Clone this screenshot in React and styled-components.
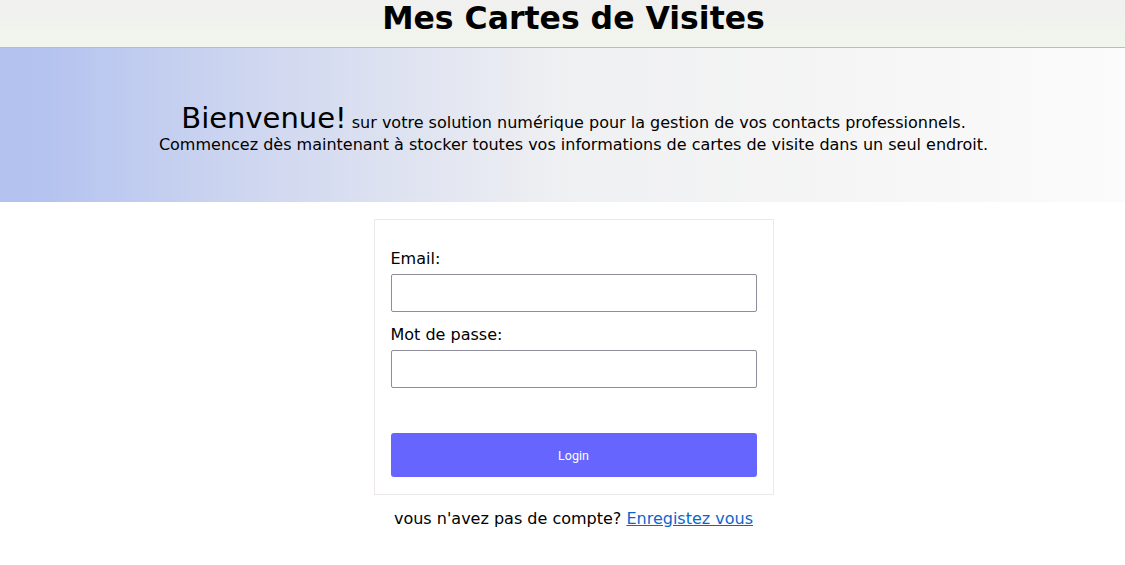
import React from "react";
import styled, { createGlobalStyle } from "styled-components";

const GlobalStyle = createGlobalStyle`
  html, body {
    margin: 0;
    padding: 0;
    background: #ffffff;
    font-family: "DejaVu Sans", Verdana, sans-serif;
    color: #000;
  }
  * { box-sizing: border-box; }
`;

const Header = styled.header`
  height: 48px;
  padding-left: 22px;
  background: linear-gradient(to bottom, #f0f0f0 0%, #f2f5ec 100%);
  border-bottom: 1px solid #bcbcbc;
  text-align: center;
`;

const Title = styled.h1`
  margin: 0;
  font-size: 31.5px;
  font-weight: bold;
  line-height: 37px;
`;

const Hero = styled.section`
  height: 154px;
  padding: 53px 0 0 22px;
  background: linear-gradient(to right, #b3c2ef 3%, #d2d9f0 25%, #eff0f2 50%, #f5f5f5 75%, #fbfbfb 100%);
  text-align: center;
  font-size: 16px;
`;

const Big = styled.span`
  font-size: 29px;
`;

const Main = styled.main`
  padding: 17px 0 0 22px;
  display: flex;
  flex-direction: column;
  align-items: center;
`;

const Card = styled.form`
  width: 400px;
  border: 1px solid #ece8ea;
  padding: 29px 16px 17px;
  display: flex;
  flex-direction: column;
`;

const Label = styled.label`
  display: block;
  font-size: 16px;
  margin-bottom: 6px;
`;

const Input = styled.input`
  display: block;
  width: 100%;
  height: 38px;
  border: 1px solid #8d8d9b;
  border-radius: 2px;
  margin-bottom: ${(p) => p.$gap}px;
  font-size: 16px;
  padding: 4px 8px;
  outline: none;
`;

const Button = styled.button`
  width: 100%;
  height: 44px;
  border: none;
  border-radius: 3px;
  background: #6666ff;
  color: #ffffff;
  font-family: Roboto, "Noto Sans", sans-serif;
  font-size: 12.5px;
  padding-top: 2px;
  cursor: pointer;
`;

const Footer = styled.p`
  margin: 14px 0 0;
  font-size: 16px;
`;

const Link = styled.a`
  color: #0b66cc;
  text-decoration: underline;
`;

export default function App() {
  return (
    <>
      <GlobalStyle />
      <Header>
        <Title>Mes Cartes de Visites</Title>
      </Header>
      <Hero>
        <Big>Bienvenue!</Big> sur votre solution numérique pour la gestion de vos contacts professionnels.
        <br />
        Commencez dès maintenant à stocker toutes vos informations de cartes de visite dans un seul endroit.
      </Hero>
      <Main>
        <Card onSubmit={(e) => e.preventDefault()}>
          <Label htmlFor="email">Email:</Label>
          <Input id="email" type="email" $gap={13} />
          <Label htmlFor="password">Mot de passe:</Label>
          <Input id="password" type="password" $gap={45} />
          <Button type="submit">Login</Button>
        </Card>
        <Footer>
          vous n'avez pas de compte? <Link href="#">Enregistez vous</Link>
        </Footer>
      </Main>
    </>
  );
}
